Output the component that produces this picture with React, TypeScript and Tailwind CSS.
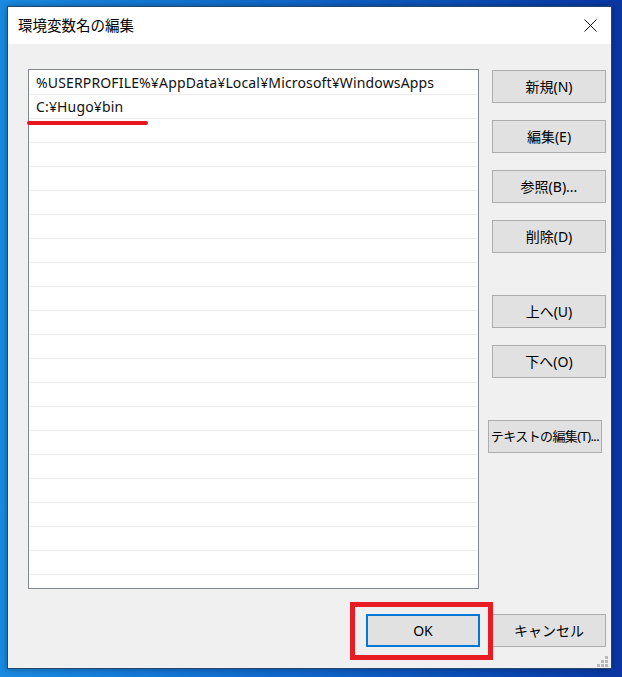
import React from 'react'

const rows = [
  '%USERPROFILE%¥AppData¥Local¥Microsoft¥WindowsApps',
  'C:¥Hugo¥bin',
  ...Array.from({ length: 20 }, () => ''),
]

const Btn: React.FC<{ label: string; className?: string }> = ({ label, className = '' }) => (
  <div
    className={`w-[114px] h-[33px] flex items-center justify-center bg-[#e1e1e1] border border-[#adadad] text-[14px] text-black whitespace-nowrap ${className}`}
  >
    {label}
  </div>
)

const ResizeGrip = () => (
  <svg width="12" height="12" viewBox="0 0 12 12" className="absolute right-[3px] bottom-[1px]">
    {[
      [8, 0],
      [4, 4],
      [8, 4],
      [0, 8],
      [4, 8],
      [8, 8],
    ].map(([x, y], i) => (
      <rect key={i} x={x + 1} y={y + 1} width="3" height="3" fill="#b8b8b8" />
    ))}
  </svg>
)

export default function App() {
  return (
    <div className="w-[622px] h-[677px] pl-[7px] pt-[6px] bg-gradient-to-r from-[#1a8ae0] via-[#1064c8] to-[#0a36a2] font-['Noto_Sans','Noto_Sans_CJK_JP',sans-serif] overflow-hidden">
      <div className="w-[605px] h-[663px] border border-[#24466f] flex flex-col shadow-[0_0_6px_rgba(0,0,0,0.35)]">
        {/* title bar */}
        <div className="h-[37px] bg-white flex items-center justify-between pl-[10px] pr-[14px]">
          <span className="text-[14.5px] text-black">環境変数名の編集</span>
          <svg width="13" height="13" viewBox="0 0 13 13">
            <path d="M0.5 0.5 L12.5 12.5 M12.5 0.5 L0.5 12.5" stroke="#111" strokeWidth="1" />
          </svg>
        </div>

        {/* client area */}
        <div className="flex-1 bg-[#f0f0f0] relative">
          <div className="flex pt-[25px] pl-[20px]">
            <div className="w-[451px] h-[520px] border border-[#828790] bg-white pt-px overflow-hidden">
              {rows.map((r, i) => (
                <div
                  key={i}
                  className="h-[24px] mx-px border-b border-[#ececec] flex items-center pl-[6px] text-[14px] tracking-[0.15px] text-[#111] whitespace-nowrap"
                >
                  {r}
                </div>
              ))}
            </div>

            <div className="ml-[13px] pt-px flex flex-col">
              <Btn label="新規(N)" />
              <Btn label="編集(E)" className="mt-[17px]" />
              <Btn label="参照(B)..." className="mt-[17px]" />
              <Btn label="削除(D)" className="mt-[17px]" />
              <Btn label="上へ(U)" className="mt-[42px]" />
              <Btn label="下へ(O)" className="mt-[17px]" />
              <div className="mt-[42px] -ml-[4px] w-[114px] h-[33px] flex items-center justify-center bg-[#e1e1e1] border border-[#adadad] text-[13px] tracking-[-0.6px] text-black whitespace-nowrap">
                テキストの編集(T)...
              </div>
            </div>
          </div>

          <div className="flex justify-end gap-[12px] pr-[5px] mt-[25px]">
            <div className="w-[114px] h-[33px] flex items-center justify-center bg-[#e1e1e1] border-2 border-[#0078d7] text-[14px] text-black">
              OK
            </div>
            <Btn label="キャンセル" />
          </div>

          {/* annotations */}
          <div className="absolute left-[19px] top-[77px] w-[121px] h-[4px] rounded-full bg-[#e8141e]" />
          <div className="absolute left-[342px] top-[558px] w-[143px] h-[58px] border-[5px] border-[#e81c24]" />

          <ResizeGrip />
        </div>
      </div>
    </div>
  )
}
